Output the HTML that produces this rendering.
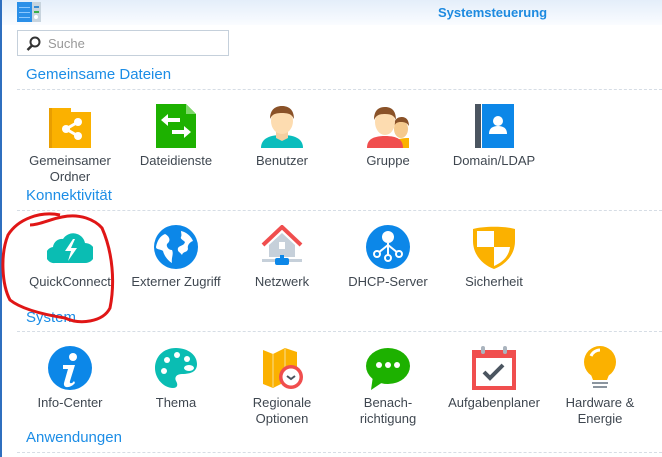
<!DOCTYPE html>
<html><head><meta charset="utf-8"><style>
body{margin:0;width:662px;height:457px;overflow:hidden;background:#fff;font-family:"Liberation Sans",sans-serif;position:relative}
.lb{position:absolute;left:0;top:0;width:2px;height:457px;background:#2f6fbf}
.hd{position:absolute;left:2px;top:0;width:660px;height:25px;background:linear-gradient(#e4eefa,#fafcff)}
.tt{position:absolute;left:438px;top:5px;font-weight:bold;font-size:13px;color:#1d8ae0}
.sb{position:absolute;left:17px;top:30px;width:210px;height:24px;border:1px solid #c5d0db;background:#fff}
.sb span{position:absolute;left:30px;top:5px;font-size:13px;color:#999}
.sec{position:absolute;left:26px;font-size:15px;color:#1c8de6}
.ln{position:absolute;left:17px;width:645px;border-top:1px dashed #d6dde5}
.it{position:absolute;width:106px;text-align:center;font-size:13px;color:#3f4750;line-height:16px}
.it svg{display:block;margin:0 auto 5px auto}
</style></head><body>
<div class="lb"></div><div class="hd"></div>
<svg style="position:absolute;left:17px;top:2px" width="25" height="21"><rect x="0" y="0" width="15" height="20" fill="#2a8fe8"/><rect x="15" y="0" width="9" height="20" fill="#c8d4de"/><rect x="2" y="5" width="11" height="1" fill="#8cc8ff"/><rect x="2" y="10" width="11" height="1" fill="#8cc8ff"/><rect x="2" y="15" width="11" height="1" fill="#8cc8ff"/><rect x="17" y="4" width="5" height="2" fill="#3a8bd0"/><rect x="17" y="9" width="5" height="2" fill="#3ab04a"/><circle cx="19" cy="15" r="2" fill="#fff"/></svg>
<div class="tt">Systemsteuerung</div>
<div class="sb"><svg style="position:absolute;left:8px;top:5px" width="16" height="16"><circle cx="9" cy="6" r="4.5" fill="none" stroke="#333" stroke-width="2"/><line x1="6" y1="9.5" x2="1.5" y2="14" stroke="#333" stroke-width="2.5"/></svg><span>Suche</span></div>

<div class="sec" style="top:66px">Gemeinsame Dateien</div><div class="ln" style="top:89px"></div>
<div class="sec" style="top:187px">Konnektivität</div><div class="ln" style="top:210px"></div>
<div class="sec" style="top:309px">System</div><div class="ln" style="top:331px"></div>
<div class="sec" style="top:429px">Anwendungen</div><div class="ln" style="top:452px"></div>

<!-- row 1 -->
<div class="it" style="left:17px;top:104px"><svg width="46" height="44"><path d="M2 4h22v4h20v38H2z" fill="#fbb100"/><rect x="2" y="4" width="3" height="42" fill="#e99e00"/><circle cx="19" cy="25" r="4" fill="#fff"/><circle cx="31" cy="18" r="4" fill="#fff"/><circle cx="31" cy="32" r="4" fill="#fff"/><path d="M19 25L31 18M19 25L31 32" stroke="#fff" stroke-width="3"/></svg>Gemeinsamer<br>Ordner</div>
<div class="it" style="left:123px;top:104px"><svg width="46" height="44"><path d="M3 0h30l10 10v34H3z" fill="#1db100"/><path d="M33 0v10h10" fill="#7ed96a"/><path d="M8 16l7-6v4h12v4H15v4z M38 28l-7-6v4H19v4h12v4z" fill="#fff"/></svg>Dateidienste</div>
<div class="it" style="left:229px;top:104px"><svg width="46" height="44"><path d="M2 44c0-8 6-13 21-13s21 5 21 13z" fill="#0abdbd"/><path d="M17 28h12v6l-6 3-6-3z" fill="#f5cfa0"/><ellipse cx="23" cy="17" rx="11" ry="13" fill="#fddcb0"/><path d="M11 15c0-10 6-13 12-13s12 3 12 13c-2-4-4-6-12-6s-10 2-12 6z" fill="#8a5228"/></svg>Benutzer</div>
<div class="it" style="left:335px;top:104px"><svg width="46" height="44"><path d="M28 44c0-7 3-10 16-10v10z" fill="#fbb100"/><ellipse cx="36" cy="25" rx="7" ry="9" fill="#f5c98d"/><path d="M29 22c0-7 4-9 8-9s7 3 7 9c-2-3-4-4-8-4s-5 1-7 4z" fill="#8a5228"/><path d="M2 44c0-8 5-12 18-12s18 4 18 12z" fill="#f04e4e"/><ellipse cx="20" cy="18" rx="10" ry="13" fill="#fddcb0"/><path d="M9 16c0-10 5-13 11-13s11 3 11 13c-2-4-4-6-11-6s-9 2-11 6z" fill="#8a5228"/></svg>Gruppe</div>
<div class="it" style="left:441px;top:104px"><svg width="46" height="44"><rect x="4" y="0" width="6" height="44" fill="#4b5560"/><rect x="11" y="0" width="32" height="44" fill="#0c87e8"/><circle cx="27" cy="17" r="5" fill="#fff"/><path d="M18 30c0-6 4-8 9-8s9 2 9 8z" fill="#fff"/></svg>Domain/LDAP</div>

<!-- row 2 -->
<div class="it" style="left:17px;top:225px"><svg width="46" height="44"><path d="M8 38a8 8 0 0 1-2-16a9 9 0 0 1 10-8a12 12 0 0 1 22 4a9 9 0 0 1 0 20z" fill="#0abdb3"/><path d="M26 14l-8 12h6l-3 10 9-13h-6l4-9z" fill="#fff"/></svg>QuickConnect</div>
<div class="it" style="left:123px;top:225px"><svg width="46" height="44"><circle cx="23" cy="22" r="22" fill="#0c87e8"/><path d="M12 9c4 2 6 6 3 9-3 2 0 7 4 7 2 4-1 8 0 13-5-3-8-8-9-12-2-2-7-1-7-4 1-6 4-11 9-13z M28 6c5 1 10 5 12 10-3 1-6 4-5 8-1 4-5 2-6 6-2-3-5-3-4-7 2-3 6-2 7-6-2-2-5-3-4-5 1-2 0-4 0-6z" fill="#fff"/></svg>Externer Zugriff</div>
<div class="it" style="left:229px;top:225px"><svg width="46" height="44"><path d="M4 20L23 2l19 18" fill="none" stroke="#f04e4e" stroke-width="4"/><path d="M10 20L23 8l13 12v12H10z" fill="#c6d0da"/><rect x="20" y="17" width="6" height="7" fill="#fff"/><rect x="21" y="30" width="4" height="4" fill="#0c87e8"/><rect x="3" y="34" width="40" height="3" fill="#c6d0da"/><rect x="16" y="33" width="14" height="7" rx="2" fill="#0c87e8"/></svg>Netzwerk</div>
<div class="it" style="left:335px;top:225px"><svg width="46" height="44"><circle cx="23" cy="22" r="22" fill="#0c87e8"/><circle cx="23" cy="12" r="6" fill="#fff"/><path d="M23 18v12M23 20l-10 8M23 20l10 8" stroke="#fff" stroke-width="2"/><circle cx="12" cy="29" r="3" fill="#0c87e8" stroke="#fff" stroke-width="2"/><circle cx="34" cy="29" r="3" fill="#0c87e8" stroke="#fff" stroke-width="2"/><circle cx="23" cy="33" r="3" fill="#0c87e8" stroke="#fff" stroke-width="2"/></svg>DHCP-Server</div>
<div class="it" style="left:441px;top:225px"><svg width="46" height="44"><path d="M2 4c10-3 32-3 42 0v12c0 14-10 24-21 28C12 40 2 30 2 16z" fill="#fbb100"/><path d="M23 6v16H6v-4c0-6 0-11 0-12z M23 22h16c-1 9-7 15-16 19z" fill="#fff"/></svg>Sicherheit</div>

<!-- row 3 -->
<div class="it" style="left:17px;top:346px"><svg width="46" height="44"><circle cx="23" cy="22" r="22" fill="#0c87e8"/><circle cx="26" cy="11" r="4" fill="#fff"/><path d="M16 19h12l-5 16c-1 3 2 3 4 0l1 2c-4 5-12 6-11 0l4-14h-5z" fill="#fff"/></svg>Info-Center</div>
<div class="it" style="left:123px;top:346px"><svg width="46" height="44"><path d="M23 2C10 2 2 11 2 22s9 20 18 20c5 0 5-4 3-7-2-4 1-7 6-7 10 0 15-3 15-10C44 9 35 2 23 2z" fill="#0abdb3"/><circle cx="14" cy="14" r="3" fill="#fff"/><circle cx="24" cy="9" r="3" fill="#fff"/><circle cx="34" cy="13" r="3" fill="#fff"/><circle cx="11" cy="25" r="3" fill="#fff"/><ellipse cx="36" cy="22" rx="5" ry="3" fill="#fff"/></svg>Thema</div>
<div class="it" style="left:229px;top:346px"><svg width="46" height="44"><path d="M4 4l10 4 12-6 12 4v34l-12-4-12 6-10-4z" fill="#fbb100"/><path d="M14 8v34M26 2v34" stroke="#f9c84a" stroke-width="2"/><circle cx="32" cy="31" r="12" fill="#f04e4e"/><circle cx="32" cy="31" r="8.5" fill="#fff"/><path d="M28 30l4 3 4-3" fill="none" stroke="#4b5560" stroke-width="2"/></svg>Regionale<br>Optionen</div>
<div class="it" style="left:335px;top:346px"><svg width="46" height="44"><ellipse cx="23" cy="20" rx="22" ry="18" fill="#1db100"/><path d="M8 30l-2 14 12-8z" fill="#1db100"/><circle cx="14" cy="19" r="3" fill="#fff"/><circle cx="23" cy="19" r="3" fill="#fff"/><circle cx="32" cy="19" r="3" fill="#fff"/></svg>Benach-<br>richtigung</div>
<div class="it" style="left:441px;top:346px"><svg width="46" height="44"><rect x="1" y="4" width="44" height="40" fill="#f04e4e"/><rect x="5" y="12" width="36" height="28" fill="#fff"/><rect x="10" y="0" width="4" height="8" rx="2" fill="#aab4be"/><rect x="32" y="0" width="4" height="8" rx="2" fill="#aab4be"/><path d="M13 26l6 6 13-13" fill="none" stroke="#4b5560" stroke-width="4"/></svg>Aufgabenplaner</div>
<div class="it" style="left:547px;top:346px"><svg width="46" height="44"><circle cx="23" cy="16" r="16" fill="#fbb100"/><path d="M13 26h20l-3 8H16z" fill="#fbb100"/><path d="M14 10a10 10 0 0 1 9-6" stroke="#fff" stroke-width="3" fill="none"/><rect x="15" y="36" width="16" height="2" fill="#8b959f"/><rect x="16" y="40" width="14" height="2" fill="#8b959f"/></svg>Hardware &amp;<br>Energie</div>

<svg style="position:absolute;left:0;top:205px" width="120" height="125"><path d="M60 10C40 6 18 14 8 30 0 50 2 80 10 95c10 8 30 14 55 18 15 7 38 4 45-10 5-25 3-55-8-80C95 15 80 8 62 12 50 14 40 20 30 20" fill="none" stroke="#e01616" stroke-width="3"/></svg>
</body></html>
